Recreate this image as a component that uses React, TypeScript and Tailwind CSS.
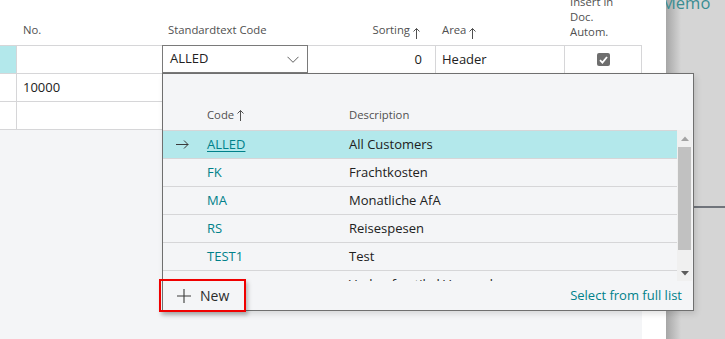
import React from "react";

const UpArrow = () => (
  <svg width="7" height="12" viewBox="0 0 7 12" className="inline-block ml-[3px] -mt-[2px]" fill="none" stroke="currentColor" strokeWidth="1">
    <path d="M3.5 1.5V12M0.5 4.5l3-3 3 3" />
  </svg>
);

const Row = ({ sel, code, desc }: { sel?: boolean; code: string; desc: string }) => (
  <div className={`h-[28px] border-b border-[#d6d6d8] flex items-center text-[13px] ${sel ? "bg-[#b3e8eb]" : ""}`}>
    <div className="w-[44px] pl-[13px] flex items-center">
      {sel && (
        <svg width="13" height="9" viewBox="0 0 13 9" fill="none" stroke="#3b3b3b" strokeWidth="1">
          <path d="M0 4.5h12.2M8 0.5l4 4-4 4" />
        </svg>
      )}
    </div>
    <div className={`w-[142px] text-[#00818a] ${sel ? "underline underline-offset-2" : ""}`}>{code}</div>
    <div className="text-[#212121]">{desc}</div>
  </div>
);

export default function App() {
  return (
    <div className="w-[725px] h-[339px] relative overflow-hidden flex font-['Open_Sans',sans-serif] text-[#212121]">
      {/* white page */}
      <div className="w-[666px] h-full bg-white relative z-10 flex">
        <div className="w-[642px] h-full flex flex-col">
          {/* header */}
          <div className="h-[46px] border-b border-[#d6d6d8] flex text-[11.3px] text-[#505050] shrink-0">
            <div className="w-[17px]" />
            <div className="w-[145px] pl-[6px] flex items-end pb-[6px]">No.</div>
            <div className="w-[146px] pl-[6px] flex items-end pb-[6px]">Standardtext Code</div>
            <div className="w-[128px] pr-[16px] flex items-end justify-end pb-[6px]">
              <span>Sorting</span>
              <UpArrow />
            </div>
            <div className="w-[129px] pl-[6px] flex items-end pb-[6px]">
              <span>Area</span>
              <UpArrow />
            </div>
            <div className="w-[77px] pl-[5px] flex flex-col justify-end pb-[6px] leading-[15px]">
              <span>Insert in</span>
              <span>Doc.</span>
              <span>Autom.</span>
            </div>
          </div>
          {/* row 1 */}
          <div className="h-[28px] border-b border-[#d6d6d8] flex text-[13px] shrink-0">
            <div className="w-[17px] bg-[#b3e8eb] border-r border-[#d6d6d8]" />
            <div className="w-[145px]" />
            <div className="w-[146px] border border-[#7a7a7a] -mt-px flex items-center justify-between pl-[7px] pr-[8px]">
              <span>ALLED</span>
              <svg width="12" height="7" viewBox="0 0 12 7" fill="none" stroke="#606060" strokeWidth="1">
                <path d="M0.5 0.8l5.5 5.5 5.5-5.5" />
              </svg>
            </div>
            <div className="w-[128px] border-r border-[#d6d6d8] flex items-center justify-end pr-[13px]">0</div>
            <div className="w-[129px] border-r border-[#d6d6d8] flex items-center pl-[6px]">Header</div>
            <div className="w-[77px] border-r border-[#d6d6d8] flex items-center justify-center">
              <div className="w-[13px] h-[13px] rounded-[2px] bg-[#6e6e6e] flex items-center justify-center">
                <svg width="9" height="8" viewBox="0 0 9 8" fill="none" stroke="white" strokeWidth="1.8">
                  <path d="M1 4.2l2.4 2.4L8 1" />
                </svg>
              </div>
            </div>
          </div>
          {/* row 2 */}
          <div className="h-[28px] border-b border-[#d6d6d8] flex text-[13px] shrink-0">
            <div className="w-[17px] border-r border-[#d6d6d8]" />
            <div className="w-[145px] flex items-center pl-[6px]">10000</div>
            <div className="flex-1" />
          </div>
          {/* row 3 */}
          <div className="h-[28px] border-b border-[#d6d6d8] flex text-[13px] shrink-0">
            <div className="w-[17px] border-r border-[#d6d6d8]" />
            <div className="flex-1" />
          </div>
          <div className="flex-1 bg-[#f4f5f7]" />
        </div>
        <div className="flex-1 bg-white" />
      </div>

      {/* grey side panel */}
      <div className="w-[59px] h-full bg-[linear-gradient(to_right,#a6a6a6,#d5d5d5_15px)] flex flex-col">
        <div className="h-[206px] overflow-hidden">
          <div className="-mt-[7px] -ml-[5px] text-[16.5px] text-[#3a8d92] leading-[20px]">Memo</div>
        </div>
        <div className="h-[2px] bg-[#70747b]" />
      </div>

      {/* dropdown popup */}
      <div className="absolute left-[162px] top-[73px] w-[532px] h-[238px] border border-[#6f6f6f] bg-[#f4f5f7] shadow-[2px_3px_6px_rgba(0,0,0,0.12)] z-20 flex flex-col">
        <div className="h-[56px] flex items-end pb-[6px] text-[11.3px] text-[#505050] shrink-0">
          <div className="w-[44px]" />
          <div className="w-[142px] flex items-center">
            <span>Code</span>
            <UpArrow />
          </div>
          <div>Description</div>
        </div>
        <div className="h-[151px] flex shrink-0">
          <div className="w-[514px] border-t border-[#d6d6d8] overflow-hidden">
            <Row sel code="ALLED" desc="All Customers" />
            <Row code="FK" desc="Frachtkosten" />
            <Row code="MA" desc="Monatliche AfA" />
            <Row code="RS" desc="Reisespesen" />
            <Row code="TEST1" desc="Test" />
            <Row code="VVK" desc="Verkaufsartikel Versand" />
          </div>
          <div className="w-[15px] bg-[#f0f0f0] flex flex-col items-center">
            <div className="h-[17px] flex items-center justify-center">
              <svg width="8" height="5" viewBox="0 0 8 5"><path d="M0 5L4 0.5 8 5z" fill="#a3a3a3" /></svg>
            </div>
            <div className="w-[13px] h-[103px] bg-[#c1c1c1]" />
            <div className="flex-1 flex items-end justify-center pb-[5px]">
              <svg width="8" height="5" viewBox="0 0 8 5"><path d="M0 0L4 4.5 8 0z" fill="#5c5c5c" /></svg>
            </div>
          </div>
        </div>
        <div className="flex-1 flex items-center justify-between pl-[14px] pr-[11px]">
          <div className="flex items-center text-[14px] text-[#2b2b2b]">
            <svg width="14" height="14" viewBox="0 0 14 14" fill="none" stroke="#3b3b3b" strokeWidth="1.1">
              <path d="M7 0v14M0 7h14" />
            </svg>
            <span className="ml-[9px]">New</span>
          </div>
          <div className="text-[13px] text-[#00818a]">Select from full list</div>
        </div>
      </div>

      {/* highlight box */}
      <div className="absolute left-[159px] top-[279px] w-[87px] h-[33px] border-2 border-[#f00000] shadow-[2px_3px_4px_rgba(0,0,0,0.25)] z-30" />
    </div>
  );
}
